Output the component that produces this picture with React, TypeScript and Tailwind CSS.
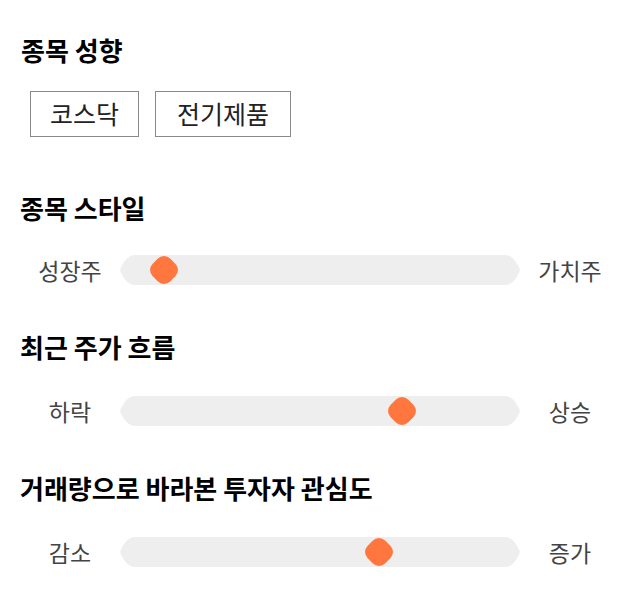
const FONT = "font-['Noto_Sans_CJK_KR','Noto_Sans',sans-serif]";

function Track({ pos }: { pos: number }) {
  return (
    <div className="relative w-[400px] h-[30px]">
      <svg width="400" height="30" viewBox="0 0 400 30" className="block">
        <path
          d="M15 0 H385 C392 0 397 7 400 15 C397 23 392 30 385 30 H15 C8 30 3 23 0 15 C3 7 8 0 15 0 Z"
          fill="#eeeeee"
        />
      </svg>
      {/* thumb: rounded diamond */}
      <div
        className="absolute top-1/2 w-[25px] h-[25px] bg-[#ff773f] rounded-[9px]"
        style={{ left: pos, transform: "translate(-50%, -50%) rotate(45deg)" }}
      />
    </div>
  );
}

function SliderRow({ left, right, pos, mt }: { left: string; right: string; pos: number; mt: string }) {
  return (
    <div className={`flex items-center h-[30px] ${mt}`}>
      <div className="w-[100px] text-center text-[23px] leading-[30px] text-[#444]">{left}</div>
      <Track pos={pos} />
      <div className="w-[100px] text-center text-[23px] leading-[30px] text-[#444]">{right}</div>
    </div>
  );
}

export default function App() {
  return (
    <div className={`${FONT} w-[640px] h-[606px] bg-white pl-[20px] pt-[35px]`}>
      <h2 className="text-[26px] leading-[30px] font-bold text-black pl-[1px]">종목 성향</h2>
      <div className="flex gap-4 mt-[26px] ml-[10px]">
        <div className="h-[46px] px-[19px] border border-[#888] flex items-center text-[25px] text-[#222]">코스닥</div>
        <div className="h-[46px] px-[21px] border border-[#888] flex items-center text-[25px] text-[#222]">전기제품</div>
      </div>

      <h2 className="mt-[56px] text-[26px] leading-[30px] font-bold text-black">종목 스타일</h2>
      <SliderRow left="성장주" right="가치주" pos={44} mt="mt-[32px]" />

      <h2 className="mt-[47px] text-[26px] leading-[30px] font-bold text-black">최근 주가 흐름</h2>
      <SliderRow left="하락" right="상승" pos={282} mt="mt-[34px]" />

      <h2 className="mt-[47px] text-[26px] leading-[30px] font-bold text-black">거래량으로 바라본 투자자 관심도</h2>
      <SliderRow left="감소" right="증가" pos={259} mt="mt-[34px]" />
    </div>
  );
}
